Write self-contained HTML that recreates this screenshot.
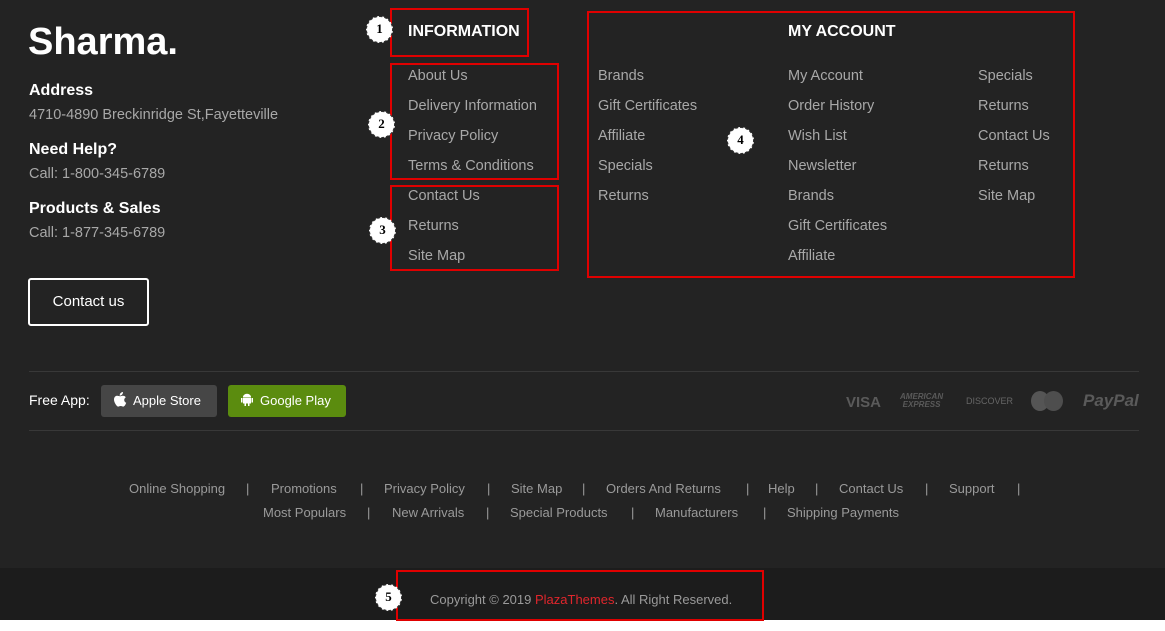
<!DOCTYPE html><html><head><meta charset="utf-8"><style>
*{margin:0;padding:0;box-sizing:border-box}
body{width:1165px;height:631px;background:#fff;font-family:"Liberation Sans",sans-serif;position:relative;overflow:hidden}
.main{position:absolute;left:0;top:0;width:1165px;height:568px;background:#232323}
.bot{position:absolute;left:0;top:568px;width:1165px;height:52px;background:#1c1c1c}
.a{position:absolute;white-space:nowrap}
.l{color:#a8a8a8;font-size:14.5px}
.h{color:#fff;font-weight:bold;font-size:16px}
.red{position:absolute;border:2px solid #e00000}
.c{position:absolute;width:27px;height:27px;border-radius:50%;background:#fff;border:1.5px dashed #333;font:bold 13px "Liberation Serif",serif;color:#000;text-align:center;line-height:24px}
.hr{position:absolute;left:29px;width:1110px;height:1px;background:#383838}
.f{color:#9a9a9a;font-size:13px;position:absolute;white-space:nowrap}
.pay{position:absolute;color:#5a5a5a;font-weight:bold;font-style:italic}
</style></head><body>
<div class="main"></div><div class="bot"></div>
<div class="a" style="left:28px;top:21px;color:#fff;font-size:38px;font-weight:bold;letter-spacing:0px">Sharma.</div>
<div class="a h" style="left:29px;top:82px">Address</div>
<div class="a l" style="left:29px;top:107px">4710-4890 Breckinridge St,Fayetteville</div>
<div class="a h" style="left:29px;top:141px">Need Help?</div>
<div class="a l" style="left:29px;top:166px">Call: 1-800-345-6789</div>
<div class="a h" style="left:29px;top:200px">Products &amp; Sales</div>
<div class="a l" style="left:29px;top:225px">Call: 1-877-345-6789</div>
<div class="a" style="left:28px;top:278px;width:121px;height:48px;border:2px solid #fff;border-radius:3px;color:#fff;font-size:15px;text-align:center;line-height:44px">Contact us</div>

<div class="red" style="left:390px;top:8px;width:139px;height:49px"></div>
<div class="a h" style="left:408px;top:23px">INFORMATION</div>
<div class="red" style="left:390px;top:63px;width:169px;height:117px"></div>
<div class="red" style="left:390px;top:185px;width:169px;height:86px"></div>
<div class="a l" style="left:408px;top:68px">About Us</div>
<div class="a l" style="left:408px;top:98px">Delivery Information</div>
<div class="a l" style="left:408px;top:128px">Privacy Policy</div>
<div class="a l" style="left:408px;top:158px">Terms &amp; Conditions</div>
<div class="a l" style="left:408px;top:188px">Contact Us</div>
<div class="a l" style="left:408px;top:218px">Returns</div>
<div class="a l" style="left:408px;top:248px">Site Map</div>
<div class="c" style="left:366px;top:16px">1</div>
<div class="c" style="left:368px;top:111px">2</div>
<div class="c" style="left:369px;top:217px">3</div>

<div class="red" style="left:587px;top:11px;width:488px;height:267px"></div>
<div class="a h" style="left:788px;top:23px">MY ACCOUNT</div>
<div class="a l" style="left:598px;top:68px">Brands</div>
<div class="a l" style="left:598px;top:98px">Gift Certificates</div>
<div class="a l" style="left:598px;top:128px">Affiliate</div>
<div class="a l" style="left:598px;top:158px">Specials</div>
<div class="a l" style="left:598px;top:188px">Returns</div>
<div class="a l" style="left:788px;top:68px">My Account</div>
<div class="a l" style="left:788px;top:98px">Order History</div>
<div class="a l" style="left:788px;top:128px">Wish List</div>
<div class="a l" style="left:788px;top:158px">Newsletter</div>
<div class="a l" style="left:788px;top:188px">Brands</div>
<div class="a l" style="left:788px;top:218px">Gift Certificates</div>
<div class="a l" style="left:788px;top:248px">Affiliate</div>
<div class="a l" style="left:978px;top:68px">Specials</div>
<div class="a l" style="left:978px;top:98px">Returns</div>
<div class="a l" style="left:978px;top:128px">Contact Us</div>
<div class="a l" style="left:978px;top:158px">Returns</div>
<div class="a l" style="left:978px;top:188px">Site Map</div>
<div class="c" style="left:727px;top:127px">4</div>

<div class="hr" style="top:371px"></div>
<div class="hr" style="top:430px"></div>
<div class="a" style="left:29px;top:392px;color:#fff;font-size:14px">Free App:</div>
<div class="a" style="left:101px;top:385px;width:116px;height:32px;background:#464646;border-radius:3px;color:#fff;font-size:13px;line-height:32px;padding-left:12px"><svg width="14" height="16" viewBox="0 0 14 16" style="vertical-align:-3px;margin-right:6px"><path fill="#fff" d="M10 0c.1 1-.4 2-1 2.6-.6.7-1.5 1-2.3 1-.1-1 .4-2 1-2.6C8.3.4 9.3 0 10 0zM7 4.3c.8 0 1.8-.7 3-.6.6 0 2 .3 2.8 1.5-2.3 1.4-2 4.7.4 5.6-.5 1.5-1.6 3.8-3 3.8-1 0-1.300-.6-2.500-.6-1.200 0-1.600.6-2.500.6C4 14.700 1 10.600 1 7.600 1 5 2.700 3.800 4.200 3.800c1 0 2 .5 2.800.5z"/></svg>Apple Store</div>
<div class="a" style="left:228px;top:385px;width:118px;height:32px;background:#5b8c0f;border-radius:3px;color:#fff;font-size:13px;line-height:32px;padding-left:12px"><svg width="14" height="14" viewBox="0 0 14 14" style="vertical-align:-2px;margin-right:6px"><path fill="#fff" d="M3 4.5h8v6H3zM1 5h1.5v4.5H1zM11.5 5H13v4.5h-1.5zM4.5 10h1.5v3H4.5zM8 10h1.5v3H8zM3 4a4 3.2 0 0 1 8 0z"/></svg>Google Play</div>
<div class="pay" style="left:846px;top:394px;font-size:15px;font-style:normal">VISA</div>
<div class="pay" style="left:900px;top:393px;font-size:8px;line-height:8px;text-align:center">AMERICAN<br>EXPRESS</div>
<div class="pay" style="left:966px;top:396px;font-size:9px;font-style:normal;font-weight:normal;color:#666">DISCOVER</div>
<div class="a" style="left:1031px;top:391px;width:18px;height:20px;border-radius:50%;background:#555"></div>
<div class="a" style="left:1044px;top:391px;width:19px;height:20px;border-radius:50%;background:#4e4e4e"></div>
<div class="pay" style="left:1083px;top:391px;font-size:17px">PayPal</div>

<div style="position:absolute;top:481px;left:0">
<span class="f" style="left:129px">Online Shopping</span><span class="f" style="left:246px">|</span>
<span class="f" style="left:271px">Promotions</span><span class="f" style="left:360px">|</span>
<span class="f" style="left:384px">Privacy Policy</span><span class="f" style="left:487px">|</span>
<span class="f" style="left:511px">Site Map</span><span class="f" style="left:582px">|</span>
<span class="f" style="left:606px">Orders And Returns</span><span class="f" style="left:746px">|</span>
<span class="f" style="left:768px">Help</span><span class="f" style="left:815px">|</span>
<span class="f" style="left:839px">Contact Us</span><span class="f" style="left:925px">|</span>
<span class="f" style="left:949px">Support</span><span class="f" style="left:1017px">|</span>
</div>
<div style="position:absolute;top:505px;left:0">
<span class="f" style="left:263px">Most Populars</span><span class="f" style="left:367px">|</span>
<span class="f" style="left:392px">New Arrivals</span><span class="f" style="left:486px">|</span>
<span class="f" style="left:510px">Special Products</span><span class="f" style="left:631px">|</span>
<span class="f" style="left:655px">Manufacturers</span><span class="f" style="left:763px">|</span>
<span class="f" style="left:787px">Shipping Payments</span>
</div>

<div class="red" style="left:396px;top:570px;width:368px;height:51px"></div>
<div class="f" style="left:430px;top:592px">Copyright © 2019 <span style="color:#e0262c">PlazaThemes</span>. All Right Reserved.</div>
<div class="c" style="left:375px;top:584px">5</div>
</body></html>
